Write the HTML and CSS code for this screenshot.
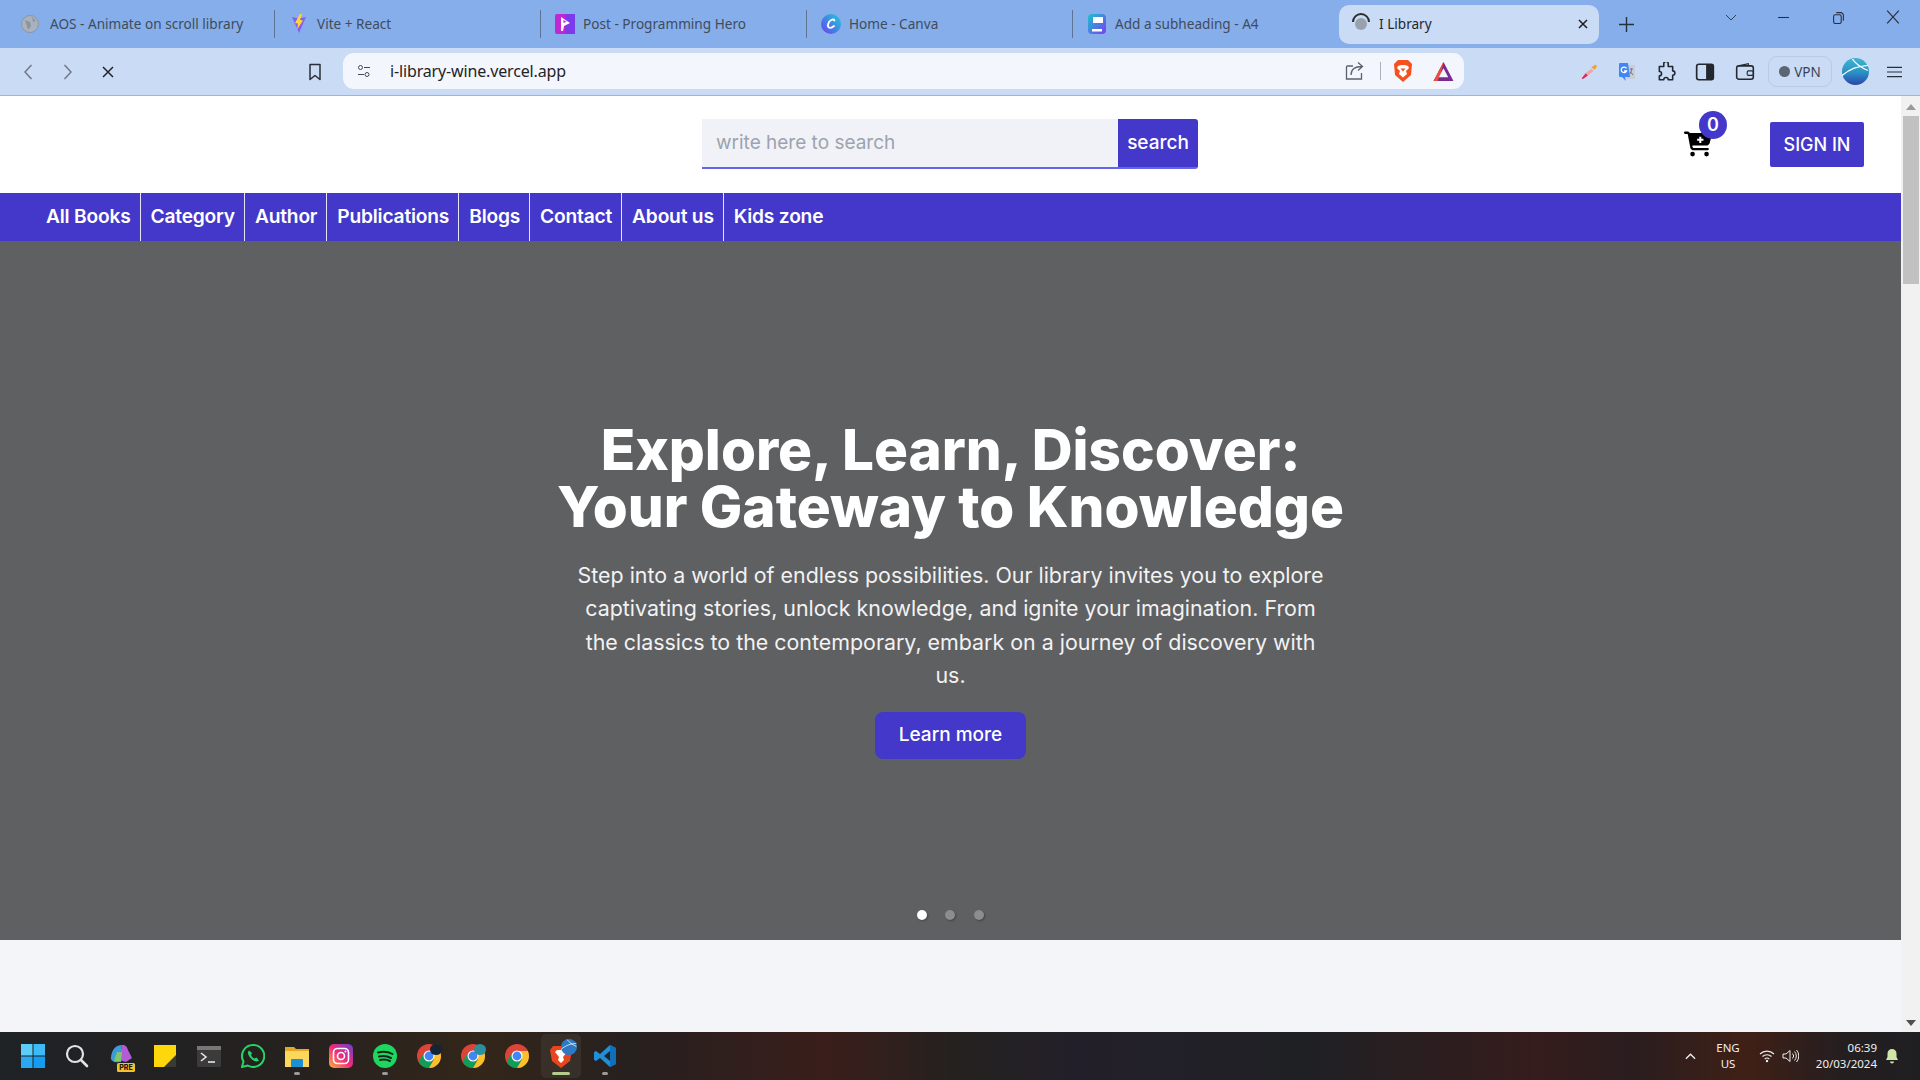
FILE: index.html
```html
<!DOCTYPE html>
<html lang="en">
<head>
<meta charset="utf-8">
<title>I Library</title>
<link rel="stylesheet" href="styles.css">
</head>
<body>
<div class="window">
  <div class="tabstrip">
    <div class="tab tab-first">
      <svg class="fav" viewBox="0 0 20 20"><circle cx="10" cy="10" r="8.5" fill="#a9b2bd" stroke="#8d96a2"/><path d="M5 6l5 2 1 4-3 4-1-4zM12 3l4 4-3 1z" fill="#8b94a0"/></svg>
      <span class="tab-title">AOS - Animate on scroll library</span>
    </div>
    <div class="tab-sep"></div>
    <div class="tab">
      <svg class="fav" viewBox="0 0 20 20"><path d="M3 3l7 1.500L17 3l-7 16z" fill="#8a5cf6"/><path d="M11 0L6 9l3 .5-1 6 6-9-3-.5 2-6z" fill="#fdd835"/></svg>
      <span class="tab-title">Vite + React</span>
    </div>
    <div class="tab-sep"></div>
    <div class="tab">
      <svg class="fav" viewBox="0 0 20 20"><rect width="20" height="20" rx="2" fill="#c026d3"/><rect x="10" width="10" height="20" fill="#7c3aed"/><path d="M6 3v14l2 0 1-5 6-3z" fill="#fff"/><path d="M8.500 6v3l3-1.300z" fill="#c026d3"/></svg>
      <span class="tab-title">Post - Programming Hero</span>
    </div>
    <div class="tab-sep"></div>
    <div class="tab">
      <svg class="fav" viewBox="0 0 20 20"><defs><linearGradient id="cv" x1="0" y1="1" x2="1" y2="0"><stop offset="0" stop-color="#6d3ff0"/><stop offset="1" stop-color="#19cfd8"/></linearGradient></defs><circle cx="10" cy="10" r="10" fill="url(#cv)"/><path d="M13.500 6.500C12.500 4.500 8 6 7 10.500c-.7 3.500 2.500 4.500 6 1.500" fill="none" stroke="#fff" stroke-width="1.800" stroke-linecap="round"/></svg>
      <span class="tab-title">Home - Canva</span>
    </div>
    <div class="tab-sep"></div>
    <div class="tab">
      <svg class="fav" viewBox="0 0 20 20"><defs><linearGradient id="a4" x1="0" y1="0" x2="1" y2="1"><stop offset="0" stop-color="#18c5cf"/><stop offset="1" stop-color="#7b3df0"/></linearGradient></defs><rect x="1" width="18" height="20" rx="4" fill="url(#a4)"/><rect x="6" y="3" width="10" height="6" fill="#fff"/><rect x="5" y="15" width="10" height="2.500" fill="#fff"/></svg>
      <span class="tab-title">Add a subheading - A4</span>
    </div>
    <div class="tab tab-active">
      <svg class="fav fav-active" viewBox="0 0 20 20"><circle cx="10" cy="12" r="6" fill="#98a2ad"/><path d="M2 10a8 8 0 0 1 16 0" fill="none" stroke="#2d2f33" stroke-width="2"/></svg>
      <span class="tab-title">I Library</span>
      <svg class="tab-close" viewBox="0 0 10 10"><path d="M1 1l8 8M9 1L1 9" stroke="#1c1c1c" stroke-width="1.500"/></svg>
    </div>
    <svg class="newtab" viewBox="0 0 14 14"><path d="M7 0v14M0 7h14" stroke="#26303c" stroke-width="1.300"/></svg>
    <div class="winctl">
      <svg class="tabmenu" viewBox="0 0 12 7"><path d="M1 1l5 5 5-5" fill="none" stroke="#33404f"/></svg>
      <svg class="wbtn wbtn-min" viewBox="0 0 12 12"><path d="M1 6h10" stroke="#26303c"/></svg>
      <svg class="wbtn" viewBox="0 0 12 12"><rect x="1.500" y="3.500" width="7" height="8" rx="1.500" fill="none" stroke="#26303c"/><path d="M4 1.500h4a2.500 2.500 0 0 1 2.500 2.500v5" fill="none" stroke="#26303c"/></svg>
      <svg class="wbtn" viewBox="0 0 12 12"><path d="M1 .5l10 11M11 .5L1 11.500" stroke="#26303c"/></svg>
    </div>
  </div>
  <div class="toolbar">
    <svg class="tool tool-back" viewBox="0 0 10 16"><path d="M8.500 1L2 8l6.500 7" fill="none" stroke="#6d7681" stroke-width="1.400"/></svg>
    <svg class="tool tool-fwd" viewBox="0 0 10 16"><path d="M1.500 1L8 8l-6.500 7" fill="none" stroke="#6d7681" stroke-width="1.400"/></svg>
    <svg class="tool tool-stop" viewBox="0 0 12 12"><path d="M1 1l10 10M11 1L1 11" stroke="#22262b" stroke-width="1.500"/></svg>
    <svg class="tool tool-mark" viewBox="0 0 14 18"><path d="M2 1.500h10v15l-5-4-5 4z" fill="none" stroke="#2a2f35" stroke-width="1.500" stroke-linejoin="round"/></svg>
    <div class="omnibox">
      <svg class="tune" viewBox="0 0 14 14"><circle cx="3.500" cy="3.500" r="2" fill="none" stroke="#444b54"/><path d="M7 3.500h6M1 10.500h6" stroke="#444b54"/><circle cx="10" cy="10.500" r="2" fill="none" stroke="#444b54"/></svg>
      <span class="url">i-library-wine.vercel.app</span>
      <svg class="share" viewBox="0 0 20 20"><path d="M8 5H2.500a1 1 0 0 0-1 1v12h15v-6" fill="none" stroke="#5a626c" stroke-width="1.300"/><path d="M6 14c0-6 4-8.500 11-8.500M13 1.500l4.500 4-4.500 4" fill="none" stroke="#5a626c" stroke-width="1.300"/></svg>
      <span class="omni-sep"></span>
      <svg class="brave" viewBox="0 0 20 24"><path d="M5 1h10l4 4-1 11-8 7-8-7L1 5z" fill="#f4511e"/><path d="M5 7l3-1h4l3 1 1 2-3 3 1 3-4 3.500L6 15l1-3-3-3z" fill="#fff"/><path d="M7.500 9.500h5L10 12.500z" fill="#f4511e"/></svg>
      <svg class="bat" viewBox="0 0 20 20"><path d="M10 1l9.500 18H.5z" fill="#7b2a8e"/><path d="M10 1L.5 19h4z" fill="#f0503a"/><path d="M10 1L4 14h3z" fill="#ef4b3a"/><path d="M10 7l4.500 8.500h-9z" fill="#f3f6fc"/></svg>
    </div>
    <div class="ext">
      <svg class="ext-i ext-pen" viewBox="0 0 16 16"><path d="M13.500 1.500a1.500 1.500 0 0 1 1.500 1.500l-2 3-3-2z" fill="#f5a02c"/><path d="M10 5l2 2-5 4-2-2z" fill="#f2a6a0"/><path d="M5 9l2 2-4.500 3.500-1-1z" fill="#e8265a"/></svg>
      <svg class="ext-i" viewBox="0 0 18 20"><path d="M7 3h10v14H9z" fill="#c9ced6"/><path d="M12 7h3M13.500 6.500v1c0 2-1 3.500-2 4.500M12.500 10l2.500 3" stroke="#6a727c" fill="none"/><path d="M2 1h8l2 14H7l1 4-4-4H2a1 1 0 0 1-1-1V2a1 1 0 0 1 1-1z" fill="#4285f4"/><path d="M8.500 6.500A2.800 2.800 0 1 0 8.600 9H6" fill="none" stroke="#fff" stroke-width="1.300"/></svg>
      <svg class="ext-i" viewBox="0 0 18 18"><path d="M7 1.500a2 2 0 0 1 4 0V4h4v4a2 2 0 0 1 0 4v4h-4a2 2 0 0 0-4 0H3v-3.500a2 2 0 0 0 0-4V4h4z" fill="none" stroke="#23282e" stroke-width="1.400" stroke-linejoin="round"/></svg>
      <svg class="ext-i" viewBox="0 0 18 18"><rect x="1.500" y="2" width="15" height="14" rx="2" fill="none" stroke="#23282e" stroke-width="1.500"/><rect x="10" y="2" width="6.500" height="14" fill="#23282e"/></svg>
      <svg class="ext-i ext-wallet" viewBox="0 0 18 18"><rect x="1.500" y="3.500" width="15" height="12" rx="2" fill="none" stroke="#23282e" stroke-width="1.400"/><path d="M3 3.500l9-2v2" fill="none" stroke="#23282e"/><rect x="11" y="8" width="5.500" height="4" rx="1" fill="none" stroke="#23282e"/></svg>
      <div class="vpn"><span class="vpn-dot"></span>VPN</div>
      <svg class="avatar" viewBox="0 0 26 26"><defs><linearGradient id="av" x1="0" y1="0" x2="0" y2="1"><stop offset="0" stop-color="#3fb6cf"/><stop offset=".55" stop-color="#2a8fc4"/><stop offset="1" stop-color="#2b45a8"/></linearGradient></defs><circle cx="13" cy="13" r="13" fill="url(#av)"/><path d="M0 17C8 10 15 8 25 7M10 1c3 4 8 8 15 11" fill="none" stroke="#fff" stroke-width="1.200"/></svg>
      <svg class="menu" viewBox="0 0 16 12"><path d="M0 1h16M0 6h16M0 11h16" stroke="#2a3038" stroke-width="1.300"/></svg>
    </div>
  </div>
  <div class="viewport">
    <main class="page">
      <header class="site-header">
        <form class="search">
          <div class="search-input">write here to search</div>
          <div class="search-btn">search</div>
        </form>
        <div class="cart">
          <svg class="cart-icon" viewBox="0 0 576 512"><path d="M0 24C0 10.700 10.700 0 24 0h45.500c22 0 41.500 12.800 50.600 32h411c26.300 0 45.500 25 38.600 50.400l-41 152.300c-8.500 31.400-37 53.300-69.500 53.300H170.700l5.400 28.500c2.200 11.300 12.100 19.500 23.600 19.500H488c13.300 0 24 10.700 24 24s-10.700 24-24 24H199.700c-34.600 0-64.300-24.600-70.700-58.500L77.400 54.500c-.7-3.800-4-6.500-7.900-6.500H24C10.700 48 0 37.300 0 24zM128 464a48 48 0 1 1 96 0 48 48 0 1 1-96 0zm336-48a48 48 0 1 1 0 96 48 48 0 1 1 0-96z"/><path d="M335 105v130M270 170h130" stroke="#fff" stroke-width="42"/></svg>
          <span class="badge">0</span>
        </div>
        <div class="signin">SIGN IN</div>
      </header>
      <nav class="site-nav">
        <a class="nav-link">All Books</a>
        <a class="nav-link">Category</a>
        <a class="nav-link">Author</a>
        <a class="nav-link">Publications</a>
        <a class="nav-link">Blogs</a>
        <a class="nav-link">Contact</a>
        <a class="nav-link">About us</a>
        <a class="nav-link nav-last">Kids zone</a>
      </nav>
      <section class="hero">
        <h1 class="hero-title">Explore, Learn, Discover:<br>Your Gateway to Knowledge</h1>
        <p class="hero-text">Step into a world of endless possibilities. Our library invites you to explore captivating stories, unlock knowledge, and ignite your imagination. From the classics to the contemporary, embark on a journey of discovery with us.</p>
        <div class="hero-btn">Learn more</div>
        <div class="dots">
          <span class="dot dot-on"></span>
          <span class="dot"></span>
          <span class="dot"></span>
        </div>
      </section>
      <div class="below"></div>
    </main>
    <div class="scrollbar">
      <svg class="sb-arrow" viewBox="0 0 10 6"><path d="M5 0l5 6H0z" fill="#9a9a9a"/></svg>
      <div class="sb-thumb"></div>
      <div class="sb-fill"></div>
      <svg class="sb-arrow" viewBox="0 0 10 6"><path d="M0 0h10L5 6z" fill="#505050"/></svg>
    </div>
  </div>
  <div class="taskbar">
    <div class="tb-apps">
      <div class="tb-item"><svg viewBox="0 0 24 24"><rect x="0" y="0" width="11.500" height="11.500" fill="#5ccdf9"/><rect x="12.500" y="0" width="11.500" height="11.500" fill="#3db9f5"/><rect x="0" y="12.500" width="11.500" height="11.500" fill="#2aa9f2"/><rect x="12.500" y="12.500" width="11.500" height="11.500" fill="#159bf0"/></svg></div>
      <div class="tb-item"><svg viewBox="0 0 24 24"><circle cx="10" cy="10" r="8" fill="none" stroke="#e4e4e4" stroke-width="2.200"/><path d="M16 16l6 6" stroke="#e4e4e4" stroke-width="2.600" stroke-linecap="round"/></svg></div>
      <div class="tb-item"><svg viewBox="0 0 24 24"><path d="M2 13C3 5 7 1 13 1l-3 17c-4 1-9-1-8-5z" fill="#3f9bd8"/><path d="M13 1c4 0 5 2 6 5l4 8-6 4-7-2z" fill="#b45cd6"/><path d="M8 8l5 0-1 10-7-1z" fill="#7bc96f"/></svg><span class="tb-pre">PRE</span></div>
      <div class="tb-item"><svg viewBox="0 0 24 24"><path d="M1 1h22v22H1z" fill="#fdd60b"/><path d="M23 11v12H11z" fill="#3a3a34"/></svg></div>
      <div class="tb-item"><svg viewBox="0 0 24 24"><rect x="0" y="2" width="24" height="21" rx="1.500" fill="#3b3b3b"/><rect x="0" y="2" width="24" height="4" fill="#777"/><path d="M4 9l5 4-5 4" fill="none" stroke="#e6e6e6" stroke-width="1.600"/><path d="M11 18h7" stroke="#e6e6e6" stroke-width="1.600"/></svg></div>
      <div class="tb-item"><svg viewBox="0 0 24 24"><path d="M12 1a11 11 0 0 0-9.500 16.500L1 23l5.700-1.500A11 11 0 1 0 12 1z" fill="none" stroke="#25d366" stroke-width="2"/><path d="M8 6.500c-2 1.500-1 5 2 8s6 4 8 2l-2.500-3-2 1c-1.500-.5-3-2-3.500-3.500l1-2z" fill="#25d366"/></svg></div>
      <div class="tb-item tb-dot"><svg viewBox="0 0 24 24"><path d="M0 3h9l2 2h13v18H0z" fill="#e5a823"/><rect x="0" y="7" width="24" height="16" fill="#fbd75c"/><rect x="6" y="15" width="12" height="8" rx="1" fill="#1c8fd6"/></svg></div>
      <div class="tb-item"><svg viewBox="0 0 24 24"><defs><linearGradient id="ig" x1="0" y1="1" x2="1" y2="0"><stop offset="0" stop-color="#fdb13b"/><stop offset=".5" stop-color="#ee2a7b"/><stop offset="1" stop-color="#6a3fd3"/></linearGradient></defs><rect width="24" height="24" rx="5" fill="url(#ig)"/><rect x="4.500" y="4.500" width="15" height="15" rx="4" fill="none" stroke="#fff" stroke-width="1.600"/><circle cx="12" cy="12" r="3.500" fill="none" stroke="#fff" stroke-width="1.600"/><circle cx="16.500" cy="7.500" r="1" fill="#fff"/></svg></div>
      <div class="tb-item tb-dot"><svg viewBox="0 0 24 24"><circle cx="12" cy="12" r="12" fill="#1ed760"/><path d="M5 8.500c5-1.500 10-1 14.500 1.500M6 12.500c4-1 8-.7 12 1.500M7 16c3-.8 7-.5 10 1" fill="none" stroke="#14261a" stroke-width="2" stroke-linecap="round"/></svg></div>
      <div class="tb-item"><svg viewBox="0 0 24 24"><use href="#chrome"/></svg><span class="tb-over tb-over-dark"></span></div>
      <div class="tb-item"><svg viewBox="0 0 24 24"><use href="#chrome"/></svg><span class="tb-over tb-over-teal"></span></div>
      <div class="tb-item"><svg viewBox="0 0 24 24"><use href="#chrome"/></svg></div>
      <div class="tb-item tb-active"><svg viewBox="0 0 24 24"><path d="M4 2h16l3 4-2 11-9 7-9-7L1 6z" fill="#e8451f"/><path d="M8 6h8l2 2-4 5 1 3-3 3-3-3 1-3-4-5z" fill="#fff"/></svg><svg class="tb-globe" viewBox="0 0 26 26"><circle cx="13" cy="13" r="13" fill="#2f78c4"/><path d="M0 17C8 10 15 8 25 7M10 1c3 4 8 8 15 11" fill="none" stroke="#cfe8f5" stroke-width="1.500"/></svg></div>
      <div class="tb-item tb-dot"><svg viewBox="0 0 24 24"><path d="M17 1l6 3v16l-6 3L7 14l-4 3-2-1V8l2-1 4 3zM17 7l-6 5 6 5z" fill="#1f8fdc"/><path d="M17 1l6 3v16l-6 3z" fill="#0f6fb8"/></svg></div>
    </div>
    <div class="tray">
      <svg class="tray-up" viewBox="0 0 12 8"><path d="M1 7l5-5 5 5" fill="none" stroke="#eee" stroke-width="1.500"/></svg>
      <div class="lang"><span>ENG</span><span>US</span></div>
      <svg class="wifi" viewBox="0 0 16 14"><path d="M1 5a10 10 0 0 1 14 0M3.500 7.500a6.500 6.500 0 0 1 9 0M5.700 10a3.500 3.500 0 0 1 4.600 0" fill="none" stroke="#eee" stroke-width="1.100"/><circle cx="8" cy="12" r="1.200" fill="#eee"/></svg>
      <svg class="vol" viewBox="0 0 17 14"><path d="M1 5h3l4-3.500v11L4 9H1z" fill="none" stroke="#eee"/><path d="M10.500 4.500a3.500 3.500 0 0 1 0 5M12.500 2.500a6.500 6.500 0 0 1 0 9M14.500 1a9 9 0 0 1 0 12" fill="none" stroke="#eee"/></svg>
      <div class="clock"><span>06:39</span><span>20/03/2024</span></div>
      <svg class="bell" viewBox="0 0 14 16"><path d="M7 1a4.500 4.500 0 0 0-4.500 4.500V9L1 12h12l-1.500-3V5.500A4.500 4.500 0 0 0 7 1z" fill="#cfe6a8"/><path d="M5 13.500h4a2 2 0 0 1-4 0z" fill="#cfe6a8"/></svg>
    </div>
  </div>
</div>
<svg class="defs" width="0" height="0"><defs><g id="chrome"><circle cx="12" cy="12" r="12" fill="#db4437"/><path d="M12 24a12 12 0 0 1-10.400-6L7 8.500 12 17l5-1-4.500 8z" fill="#0f9d58"/><path d="M24 12a12 12 0 0 1-12 12l5.200-9L12 7h10.900a12 12 0 0 1 1.100 5z" fill="#fbc02d"/><circle cx="12" cy="12" r="5.500" fill="#fff"/><circle cx="12" cy="12" r="4.400" fill="#4285f4"/></g></defs></svg>
</body>
</html>
```
FILE: styles.css
```css
* { box-sizing: border-box; }
html, body { margin: 0; padding: 0; height: 100%; overflow: hidden; }
body { font-family: "Inter", "Liberation Sans", sans-serif; background: #fff; }
.defs { position: absolute; }
.window { width: 1920px; height: 1080px; display: flex; flex-direction: column; }

.tabstrip { height: 48px; background: #86aeea; display: flex; align-items: flex-start; font-family: "Noto Sans", "Open Sans", sans-serif; flex: none; }
.tab { width: 265px; height: 39px; margin-top: 4px; display: flex; align-items: center; padding-left: 14px; font-size: 13.600px; color: #3f4c5c; flex: none; }
.tab-first { width: 274px; padding-left: 20px; }
.tab-title { margin-left: 8px; white-space: nowrap; }
.tab-first .tab-title { margin-left: 10px; }
.fav { width: 20px; height: 20px; flex: none; }
.fav-active { margin-top: -3px; }
.tab-sep { width: 1px; height: 28px; margin-top: 10px; background: #5d7493; flex: none; }
.tab-active { width: 260px; margin-top: 5px; margin-left: 1px; padding-left: 12px; padding-bottom: 2px; background: #c9dbf5; border-radius: 10px; color: #1f2730; }
.tab-close { width: 10px; height: 10px; margin-left: auto; margin-right: 11px; }
.newtab { width: 15px; height: 15px; margin: 17px 0 0 20px; flex: none; }
.winctl { margin-left: auto; display: flex; align-items: center; height: 34px; }
.tabmenu { width: 12px; height: 7px; margin-right: 40px; }
.wbtn { width: 13px; height: 13px; margin-right: 41px; }
.wbtn-min { margin-right: 42px; }
.wbtn:last-child { margin-right: 20px; width: 14px; height: 14px; }

.toolbar { height: 48px; background: #c9dbf5; border-bottom: 1px solid #a6b4cb; display: flex; align-items: center; flex: none; }
.tool { flex: none; }
.tool-back { width: 10px; height: 16px; margin-left: 23px; }
.tool-fwd { width: 10px; height: 16px; margin-left: 30px; }
.tool-stop { width: 12px; height: 12px; margin-left: 29px; }
.tool-mark { width: 14px; height: 18px; margin-left: 194px; }
.omnibox { width: 1121px; height: 36px; margin-left: 21px; margin-top: -1px; background: #f3f6fc; border-radius: 11px; display: flex; align-items: center; padding-left: 14px; flex: none; }
.tune { width: 14px; height: 14px; }
.url { margin-left: 19px; font-size: 16px; color: #1f2328; font-family: "Noto Sans", sans-serif; letter-spacing: -.15px; }
.share { width: 20px; height: 20px; margin-left: auto; }
.omni-sep { width: 1px; height: 18px; background: #a9b0ba; margin-left: 15px; }
.brave { width: 20px; height: 24px; margin-left: 12px; }
.bat { width: 21px; height: 21px; margin-left: 20px; margin-right: 10px; }
.ext { display: flex; align-items: center; gap: 19px; flex: 1; }
.ext-i { width: 20px; height: 20px; flex: none; }
.ext-pen { margin-left: 116px; width: 18px; height: 18px; }
.ext-wallet { margin-left: 1px; }
.vpn { height: 31px; width: 64px; margin-left: -6px; border: 1px solid #b9cae3; border-radius: 9px; display: flex; align-items: center; justify-content: center; gap: 4px; font-size: 13.500px; color: #3a4350; font-family: "Noto Sans", sans-serif; flex: none; }
.vpn-dot { width: 11px; height: 11px; border-radius: 50%; background: #5c6570; }
.avatar { width: 27px; height: 27px; margin-left: -9px; flex: none; }
.menu { width: 15px; height: 12px; margin-left: -1px; flex: none; }

.viewport { height: 936px; display: flex; flex: none; }
.page { flex: 1; min-width: 0; display: flex; flex-direction: column; }
.site-header { height: 97px; flex: none; background: #fff; display: flex; align-items: flex-start; }
.search { margin-left: 702px; margin-top: 23px; height: 50px; width: 496px; display: flex; border-bottom: 2px solid #6366e8; border-radius: 0 3px 3px 0; flex: none; }
.search-input { width: 416px; height: 48px; background: #f0f2f7; color: #9ca3af; font-size: 19px; line-height: 47px; padding-left: 14px; }
.search-btn { width: 80px; height: 48px; background: #4338ca; color: #fff; font-size: 19px; font-weight: 500; line-height: 47px; text-align: center; border-radius: 0 3px 0 0; }
.cart { position: relative; width: 36px; height: 44px; margin-left: 486px; margin-top: 15px; flex: none; }
.cart-icon { position: absolute; left: 0; top: 20px; width: 28px; height: 26px; }
.badge { position: absolute; left: 15px; top: 0; width: 28px; height: 28px; border-radius: 50%; background: #4338ca; color: #fff; font-size: 18px; font-weight: 600; text-align: center; line-height: 28px; }
.signin { margin-left: 50px; margin-top: 26px; width: 94px; height: 45px; background: #4338ca; color: #fff; font-size: 18px; font-weight: 500; text-align: center; line-height: 45px; border-radius: 2px; flex: none; }

.site-nav { height: 48px; flex: none; background: #4338ca; display: flex; padding-left: 36px; }
.nav-link { height: 48px; padding: 0 9px 0 10px; border-right: 1px solid #e6e6f5; color: #fff; font-size: 19.200px; font-weight: 600; line-height: 46px; letter-spacing: -.2px; white-space: nowrap; }
.nav-last { border-right: 0; }

.hero { height: 699px; flex: none; background: #5f6062; position: relative; display: flex; flex-direction: column; align-items: center; padding-top: 180px; color: #fff; }
.hero-title { margin: 0; font-size: 56.600px; line-height: 57px; font-weight: 800; text-align: center; white-space: nowrap; }
.hero-text { margin: 24px 0 0; width: 760px; font-size: 21.400px; line-height: 33.300px; text-align: center; color: #f2f2f2; }
.hero-btn { margin-top: 20px; width: 151px; height: 47px; background: #4338ca; border-radius: 8px; color: #fff; font-size: 19px; font-weight: 500; text-align: center; line-height: 45px; }
.dots { position: absolute; left: 917px; top: 669px; display: flex; gap: 18.400px; }
.dot { width: 10px; height: 10px; border-radius: 50%; background: #8c8d8f; box-shadow: 1px 1px 2px rgba(0,0,0,.3); }
.dot-on { background: #fff; }
.below { flex: 1; background: #f3f5f9; }

.scrollbar { width: 19px; flex: none; background: #f1f1f1; display: flex; flex-direction: column; align-items: center; }
.sb-arrow { width: 10px; height: 6px; margin: 8px 0 6px; flex: none; }
.sb-thumb { width: 16px; height: 168px; background: #c1c1c1; flex: none; }
.sb-fill { flex: 1; }

.taskbar { height: 48px; flex: none; display: flex; align-items: center; color: #f0f0f0; background: linear-gradient(90deg, #1f2226 0%, #25211f 15%, #33261a 25%, #26201f 33%, #3a1e1b 43%, #24211f 50%, #231f2a 56%, #1f2024 68%, #361c1c 80%, #2a1d1f 85%, #3f2016 91%, #241e20 96%, #1f1f22 100%); }
.tb-apps { display: flex; margin-left: 11px; }
.tb-item { width: 44px; height: 44px; display: flex; align-items: center; justify-content: center; position: relative; border-radius: 5px; flex: none; }
.tb-item svg { width: 24px; height: 24px; }
.tb-pre { position: absolute; left: 18px; bottom: 6px; height: 9px; width: 18px; background: #f7c12e; color: #1d1b16; font-size: 7px; font-weight: 800; line-height: 9px; text-align: center; border-radius: 1.500px; }
.tb-dot::after { content: ""; position: absolute; left: 19px; bottom: 3px; width: 6px; height: 3px; border-radius: 2px; background: #9a9a9a; }
.tb-active { width: 40px; margin: 0 2px; background: rgba(255,255,255,.06); }
.tb-active::after { content: ""; position: absolute; left: 11px; bottom: 3px; width: 18px; height: 3px; border-radius: 2px; background: #b4cc8c; }
.tb-item .tb-globe { position: absolute; right: 4px; top: 5px; width: 16px; height: 16px; }
.tb-over { position: absolute; right: 9px; top: 10px; width: 12px; height: 11px; border-radius: 50%; }
.tb-over-dark { background: #152536; }
.tb-over-teal { background: #2b8f9f; }
.tray { margin-left: auto; display: flex; align-items: center; font-family: "Noto Sans", "Open Sans", sans-serif; }
.tray-up { width: 11px; height: 8px; margin-right: 20px; }
.lang { display: flex; flex-direction: column; align-items: center; font-size: 11.500px; line-height: 16px; width: 24px; }
.wifi { width: 16px; height: 14px; margin-left: 19px; }
.vol { width: 17px; height: 14px; margin-left: 7px; }
.clock { display: flex; flex-direction: column; align-items: flex-end; font-size: 11.500px; line-height: 16px; margin-left: 16px; width: 62px; }
.bell { width: 14px; height: 16px; margin-left: 8px; margin-right: 21px; }
```
